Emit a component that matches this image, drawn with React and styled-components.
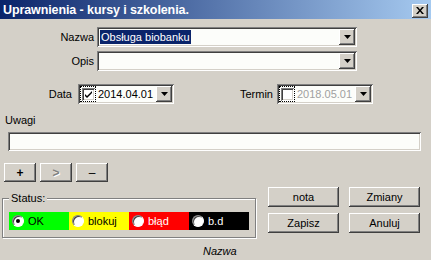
import React from 'react'
import styled, { createGlobalStyle } from 'styled-components'

const GlobalStyle = createGlobalStyle`
  html, body {
    margin: 0;
    padding: 0;
    background: #D4D0C8;
  }
  * { box-sizing: border-box; }
`

const raised = `
  box-shadow: inset -1px -1px #404040, inset 1px 1px #FFFFFF,
    inset -2px -2px #808080, inset 2px 2px #D4D0C8;
`
const sunken = `
  box-shadow: inset 1px 1px #808080, inset -1px -1px #FFFFFF,
    inset 2px 2px #404040, inset -2px -2px #D4D0C8;
`

const statuses = [
  { label: 'OK', bg: '#00FF00', color: '#000000', checked: true },
  { label: 'blokuj', bg: '#FFFF00', color: '#000000' },
  { label: 'błąd', bg: '#FF0000', color: '#FFFFFF' },
  { label: 'b.d', bg: '#000000', color: '#FFFFFF' },
]

function DropArrow() {
  return (
    <DropButton>
      <svg width="7" height="4" viewBox="0 0 7 4">
        <path d="M0 0h7L3.5 4z" fill="#000" />
      </svg>
    </DropButton>
  )
}

function DateField({ checked, value }) {
  return (
    <DateBox>
      <FocusRect>
        <CheckBox>
          {checked && (
            <svg width="9" height="9" viewBox="0 0 9 9">
              <path d="M1 4l2 2 5-5v2L3 8 1 6z" fill="#000" />
            </svg>
          )}
        </CheckBox>
      </FocusRect>
      <DateText disabled={!checked}>{value}</DateText>
      <DropArrow />
    </DateBox>
  )
}

export default function App() {
  return (
    <Window>
      <GlobalStyle />
      <TitleBar>
        <Title>Uprawnienia - kursy i szkolenia.</Title>
        <CloseButton>
          <svg width="8" height="7" viewBox="0 0 8 7">
            <path d="M0 0h2l2 2.5L6 0h2L5 3.5 8 7H6L4 4.5 2 7H0l3-3.5z" fill="#000" />
          </svg>
        </CloseButton>
      </TitleBar>

      <FieldRow top={8}>
        <FieldLabel>Nazwa</FieldLabel>
        <Combo>
          <ComboValue><Selected>Obsługa biobanku</Selected></ComboValue>
          <DropArrow />
        </Combo>
      </FieldRow>
      <FieldRow top={4}>
        <FieldLabel>Opis</FieldLabel>
        <Combo>
          <ComboValue />
          <DropArrow />
        </Combo>
      </FieldRow>

      <DateRow>
        <DateLabel width={72}>Data</DateLabel>
        <DateField checked value="2014.04.01" />
        <DateLabel width={99}>Termin</DateLabel>
        <DateField value="2018.05.01" />
      </DateRow>

      <NotesLabel>Uwagi</NotesLabel>
      <NotesBox />

      <SmallButtons>
        <SmallButton bold>+</SmallButton>
        <SmallButton bold disabled>&gt;</SmallButton>
        <SmallButton>–</SmallButton>
      </SmallButtons>

      <BottomArea>
        <GroupBox>
          <Legend>Status:</Legend>
          <StatusStrip>
            {statuses.map((s) => (
              <StatusCell key={s.label} bg={s.bg} textColor={s.color}>
                <Radio>{s.checked && <RadioDot />}</Radio>
                {s.label}
              </StatusCell>
            ))}
          </StatusStrip>
        </GroupBox>
        <ActionGrid>
          <ActionButton>nota</ActionButton>
          <ActionButton>Zmiany</ActionButton>
          <ActionButton>Zapisz</ActionButton>
          <ActionButton>Anuluj</ActionButton>
        </ActionGrid>
      </BottomArea>

      <Footer>Nazwa</Footer>
    </Window>
  )
}

const Window = styled.div`
  width: 431px;
  height: 260px;
  background: #D4D0C8;
  display: flex;
  flex-direction: column;
  font-family: "Liberation Sans", Arial, sans-serif;
  font-size: 11px;
  color: #000;
  overflow: hidden;
`

const TitleBar = styled.div`
  height: 19px;
  flex-shrink: 0;
  display: flex;
  align-items: center;
  justify-content: space-between;
  padding: 0 3px 0 3px;
  background: linear-gradient(to right, #0A246A, #A6CAF0);
`

const Title = styled.div`
  color: #FFFFFF;
  font-weight: bold;
  font-size: 12.5px;
  letter-spacing: -0.1px;
`

const CloseButton = styled.div`
  width: 16px;
  height: 14px;
  background: #D4D0C8;
  display: flex;
  align-items: center;
  justify-content: center;
  margin-top: 2px;
  ${raised}
`

const FieldRow = styled.div`
  display: flex;
  align-items: center;
  margin-top: ${({ top }) => top}px;
`

const FieldLabel = styled.div`
  width: 94px;
  text-align: right;
  margin-right: 3px;
`

const Combo = styled.div`
  width: 260px;
  height: 20px;
  background: #FCFDFA;
  display: flex;
  align-items: center;
  padding: 2px;
  ${sunken}
`

const ComboValue = styled.div`
  flex: 1;
  padding-left: 1px;
  display: flex;
  align-items: center;
`

const Selected = styled.span`
  background: #0A246A;
  color: #FFFFFF;
  padding: 0 1px;
  line-height: 14px;
`

const DropButton = styled.div`
  width: 16px;
  height: 16px;
  background: #D4D0C8;
  display: flex;
  align-items: center;
  justify-content: center;
  flex-shrink: 0;
  ${raised}
`

const DateRow = styled.div`
  display: flex;
  align-items: center;
  margin-top: 13px;
`

const DateLabel = styled.div`
  width: ${({ width }) => width}px;
  text-align: right;
  margin-right: ${({ width }) => (width > 80 ? 4 : 6)}px;
`

const DateBox = styled.div`
  width: 96px;
  height: 20px;
  background: #FCFDFA;
  display: flex;
  align-items: center;
  padding: 2px;
  ${sunken}
`

const FocusRect = styled.div`
  width: 16px;
  height: 16px;
  border: 1px dotted #000;
  display: flex;
  align-items: center;
  justify-content: center;
`

const CheckBox = styled.div`
  width: 13px;
  height: 13px;
  background: #FFFFFF;
  display: flex;
  align-items: center;
  justify-content: center;
  ${sunken}
`

const DateText = styled.div`
  flex: 1;
  padding-left: 2px;
  color: ${({ disabled }) => (disabled ? '#A0A0A0' : '#000')};
`

const NotesLabel = styled.div`
  margin: 10px 0 0 5px;
  line-height: 12px;
`

const NotesBox = styled.div`
  width: 413px;
  height: 19px;
  margin: 6px 0 0 8px;
  background: #FCFDFA;
  ${sunken}
`

const SmallButtons = styled.div`
  display: flex;
  gap: 4px;
  margin: 12px 0 0 4px;
`

const SmallButton = styled.div`
  width: 32px;
  height: 19px;
  display: flex;
  align-items: center;
  justify-content: center;
  font-weight: ${({ bold }) => (bold ? 'bold' : 'normal')};
  font-size: 12px;
  color: ${({ disabled }) => (disabled ? '#808080' : '#000')};
  text-shadow: ${({ disabled }) => (disabled ? '1px 1px #FFFFFF' : 'none')};
  ${raised}
`

const BottomArea = styled.div`
  display: flex;
  align-items: flex-start;
`

const GroupBox = styled.div`
  position: relative;
  width: 254px;
  height: 40px;
  margin: 16px 0 0 2px;
  border: 1px solid #808080;
  box-shadow: inset 1px 1px #FFFFFF, 1px 1px #FFFFFF;
  padding: 13px 0 0 6px;
`

const Legend = styled.div`
  position: absolute;
  top: -7px;
  left: 6px;
  padding: 0 2px;
  background: #D4D0C8;
  line-height: 13px;
`

const StatusStrip = styled.div`
  display: grid;
  grid-template-columns: repeat(4, 60px);
  height: 18px;
`

const StatusCell = styled.div`
  background: ${({ bg }) => bg};
  color: ${({ textColor }) => textColor};
  display: flex;
  align-items: center;
  padding-left: 3px;
  gap: 4px;
`

const Radio = styled.div`
  width: 12px;
  height: 12px;
  border-radius: 50%;
  background: #FFFFFF;
  border: 1px solid;
  border-color: #808080 #FFFFFF #FFFFFF #808080;
  box-shadow: inset 1px 1px #404040;
  display: flex;
  align-items: center;
  justify-content: center;
`

const RadioDot = styled.div`
  width: 4px;
  height: 4px;
  border-radius: 50%;
  background: #000;
`

const ActionGrid = styled.div`
  display: grid;
  grid-template-columns: repeat(2, 71px);
  grid-auto-rows: 20px;
  column-gap: 10px;
  row-gap: 6px;
  margin: 5px 0 0 12px;
`

const ActionButton = styled.div`
  display: flex;
  align-items: center;
  justify-content: center;
  ${raised}
`

const Footer = styled.div`
  margin: 7px 0 0 203px;
  font-style: italic;
`
